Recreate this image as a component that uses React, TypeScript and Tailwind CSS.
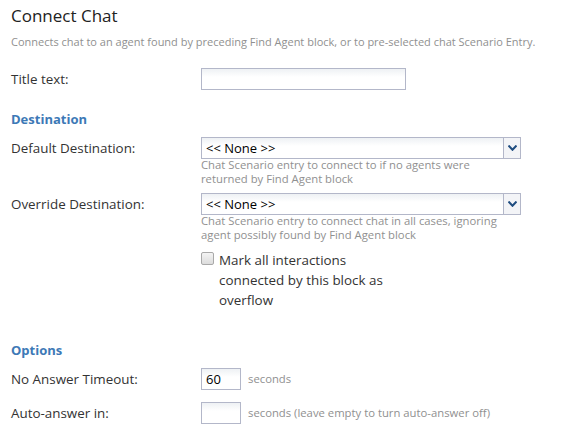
import React from "react";

const font = { fontFamily: '"Open Sans", "Noto Sans", sans-serif' };

function TextBox({ w, value }: { w: string; value?: string }) {
  return (
    <div
      className={`${w} h-[22px] border border-[#b3b7c9] bg-gradient-to-b from-[#eef1f4] to-white to-[40%] px-[4px] text-[13px] leading-[20px] text-black`}
    >
      {value}
    </div>
  );
}

function Select({ help }: { help: string[] }) {
  return (
    <div className="flex flex-col">
      <div className="flex h-[22px] w-[320px] border border-[#b3b7c9] bg-gradient-to-b from-[#eef1f4] to-white to-[40%]">
        <div className="flex-1 px-[4px] text-[13px] leading-[20px] text-black">&lt;&lt; None &gt;&gt;</div>
        <div className="flex w-[17px] items-center justify-center border-l border-[#b3b7c9] bg-[#f3f4f7]">
          <svg width="9" height="6" viewBox="0 0 9 6">
            <path d="M0.5 0.5 L4.5 4.8 L8.5 0.5" stroke="#1f4d80" strokeWidth="2" fill="none" />
          </svg>
        </div>
      </div>
      <div className="mt-[-1px] text-[11.3px] leading-[13.5px] text-[#909090]">
        {help.map((h) => (
          <div key={h}>{h}</div>
        ))}
      </div>
    </div>
  );
}

function Row({ label, children, className = "" }: { label: string; children: React.ReactNode; className?: string }) {
  return (
    <div className={`flex ${className}`}>
      <div className="w-[190px] shrink-0 text-[13.4px] leading-[22px] text-[#333]">{label}</div>
      {children}
    </div>
  );
}

export default function App() {
  return (
    <div className="h-[444px] w-[572px] overflow-hidden bg-white px-[11px] pt-[3px]" style={font}>
      <div className="text-[17px] leading-[26px] text-[#222]">Connect Chat</div>
      <div className="mt-[6px] text-[11px] leading-[14px] text-[#909090]">
        Connects chat to an agent found by preceding Find Agent block, or to pre-selected chat Scenario Entry.
      </div>

      <Row label="Title text:" className="mt-[19px]">
        <TextBox w="w-[205px]" />
      </Row>

      <div className="mt-[20px] text-[13px] font-bold leading-[18px] text-[#3d79b6]">Destination</div>

      <Row label="Default Destination:" className="mt-[9px]">
        <Select help={["Chat Scenario entry to connect to if no agents were", "returned by Find Agent block"]} />
      </Row>

      <Row label="Override Destination:" className="mt-[8px]">
        <Select help={["Chat Scenario entry to connect chat in all cases, ignoring", "agent possibly found by Find Agent block"]} />
      </Row>

      <div className="mt-[9px] flex pl-[190px]">
        <div className="mr-[5px] mt-[2px] h-[13px] w-[13px] rounded-[2px] border border-[#a9a9a9] bg-gradient-to-b from-[#f4f4f4] to-[#dcdcdc]" />
        <div className="text-[13.4px] leading-[20px] text-[#333]">
          Mark all interactions
          <br />
          connected by this block as
          <br />
          overflow
        </div>
      </div>

      <div className="mt-[31px] text-[13px] font-bold leading-[18px] text-[#3d79b6]">Options</div>

      <Row label="No Answer Timeout:" className="mt-[9px]">
        <TextBox w="w-[40px]" value="60" />
        <span className="ml-[7px] text-[11.3px] leading-[22px] text-[#909090]">seconds</span>
      </Row>

      <Row label="Auto-answer in:" className="mt-[12px]">
        <TextBox w="w-[40px]" />
        <span className="ml-[7px] text-[11.3px] leading-[22px] text-[#909090]">seconds (leave empty to turn auto-answer off)</span>
      </Row>
    </div>
  );
}
